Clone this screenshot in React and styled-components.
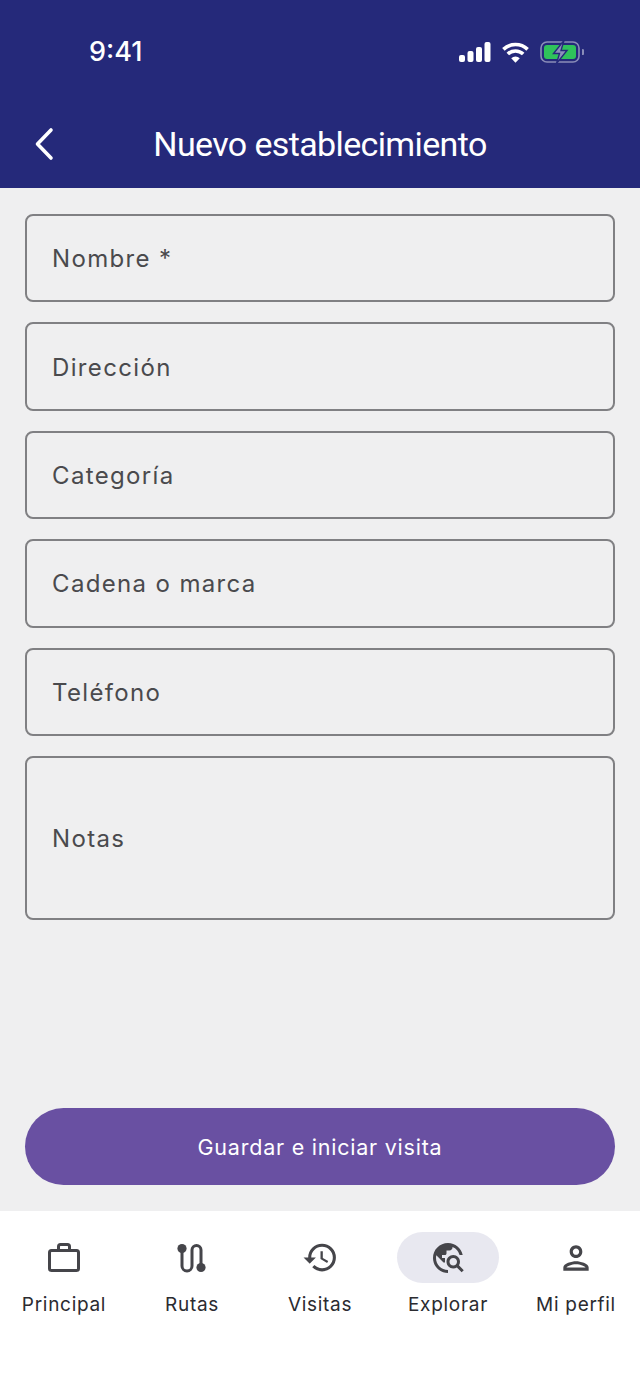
import React from "react";
import styled, { createGlobalStyle } from "styled-components";
import { MdHistory, MdTravelExplore, MdOutlinePerson } from "react-icons/md";

const Global = createGlobalStyle`
  html, body { margin: 0; padding: 0; background: #efeff0; }
  body { font-family: Inter, "Liberation Sans", sans-serif; }
  * { box-sizing: border-box; }
`;
const Screen = styled.div`
  width: 640px; height: 1392px; display: flex; flex-direction: column; background: #efeff0; overflow: hidden;
`;
const Header = styled.header`
  height: 188px; background: #25297a; color: #fff; display: flex; flex-direction: column; flex: none;
`;
const StatusBar = styled.div`
  height: 104px; padding: 36px 56px 0 89px; display: flex; justify-content: space-between; align-items: flex-start;
`;
const Time = styled.span`
  font-size: 27px; font-weight: 500; line-height: 32px;
`;
const StatusIcons = styled.div`
  display: flex; align-items: center; gap: 11px; height: 32px;
`;
const TitleBar = styled.div`
  height: 84px; padding: 0 0 4px 32px; display: flex; align-items: center; position: relative;
`;
const Title = styled.h1`
  position: absolute; left: 0; right: 0; top: 0; bottom: 4px; margin: 0;
  display: flex; align-items: center; justify-content: center;
  font-family: Roboto, sans-serif; font-size: 34px; font-weight: 400; letter-spacing: -0.63px;
`;
const Form = styled.main`
  flex: 1; padding: 26px 25px; display: flex; flex-direction: column; gap: 20px;
`;
const Field = styled.div`
  height: ${p => p.$h || 88.4}px; border: 2px solid #808083; border-radius: 8px;
  padding: 1px 0 0 25px; display: flex; align-items: center;
  font-size: 24px; letter-spacing: 1.35px; color: #4a4a4d;
`;
const Footer = styled.div`
  padding: 0 25px 26px; flex: none;
`;
const Button = styled.button`
  width: 100%; height: 77px; border: 0; border-radius: 39px; background: #6950a2; color: #fff;
  font-family: Inter, sans-serif; font-size: 21.5px; font-weight: 400; letter-spacing: 0.77px;
`;
const Nav = styled.nav`
  height: 181px; flex: none; background: #fff; display: grid; grid-template-columns: repeat(5, 128px); padding-top: 21px;
  align-content: start;
`;
const NavItem = styled.div`
  display: flex; flex-direction: column; align-items: center; color: #45454a;
`;
const Pill = styled.div`
  width: 102px; height: 51px; border-radius: 26px; display: flex; align-items: center; justify-content: center;
  background: ${p => (p.$active ? "#e8e8f0" : "transparent")};
`;
const NavLabel = styled.span`
  margin-top: 10px; font-size: 19px; line-height: 24px; letter-spacing: 0.7px; color: #2b2b30; white-space: nowrap;
`;

const Signal = () => (
  <svg width="32" height="20" viewBox="0 0 32 20" fill="#fff">
    <rect x="0" y="13" width="6" height="7" rx="2" />
    <rect x="8.5" y="9" width="6" height="11" rx="2" />
    <rect x="17" y="5" width="6" height="15" rx="2" />
    <rect x="25.5" y="0" width="6" height="20" rx="2" />
  </svg>
);
const Wifi = () => (
  <svg width="27" height="21" viewBox="0 0 27 21" fill="none" stroke="#fff" strokeWidth="3.6">
    <path d="M1.4 7.4 A17.5 17.5 0 0 1 25.6 7.4" />
    <path d="M5.8 12 A11.2 11.2 0 0 1 21.2 12" />
    <path d="M13.5 20.8 L9.2 16.2 A6 6 0 0 1 17.8 16.2 Z" fill="#fff" stroke="none" />
  </svg>
);
const Battery = () => (
  <svg width="44" height="22" viewBox="0 0 44 22" fill="none">
    <rect x="1" y="1" width="38" height="20" rx="6" stroke="#8a8db8" strokeWidth="1.6" />
    <rect x="4" y="4" width="32" height="14" rx="3" fill="#2fc25b" />
    <path d="M42 8 a3 3 0 0 1 0 6 Z" fill="#8a8db8" />
    <path d="M24 -0.5 L13.5 12.5 H19.5 L16.5 22.5 L27 9.5 H21 Z" fill="#8d90bb" stroke="#25297a" strokeWidth="1.4" />
  </svg>
);
const Back = () => (
  <svg width="26" height="34" viewBox="0 0 26 34" fill="none" stroke="#fff" strokeWidth="3.6" strokeLinecap="round" strokeLinejoin="round">
    <path d="M19 3 L5.5 17 L19 31" />
  </svg>
);
const Briefcase = () => (
  <svg width="34" height="34" viewBox="0 0 34 34" fill="none" stroke="#45454a" strokeWidth="3">
    <rect x="2.5" y="9.5" width="29" height="20" rx="2" />
    <path d="M11.5 9.5 V5.5 a2 2 0 0 1 2 -2 h7 a2 2 0 0 1 2 2 V9.5" />
  </svg>
);
const Route = () => (
  <svg width="36" height="36" viewBox="0 0 36 36" fill="none" stroke="#45454a" strokeWidth="3" strokeLinecap="round">
    <circle cx="8" cy="8.5" r="4.6" fill="#45454a" stroke="none" />
    <circle cx="27" cy="27.5" r="4.6" fill="#45454a" stroke="none" />
    <path d="M8 8 V26 a5 5 0 0 0 10 0 V10 a4.5 4.5 0 0 1 9 0 V27" />
  </svg>
);

const fields = [
  { label: "Nombre *" }, { label: "Dirección" }, { label: "Categoría" },
  { label: "Cadena o marca" }, { label: "Teléfono" }, { label: "Notas", h: 164.4 },
];
const items = [
  { label: "Principal", icon: <Briefcase /> },
  { label: "Rutas", icon: <Route /> },
  { label: "Visitas", icon: <MdHistory size={37} /> },
  { label: "Explorar", icon: <MdTravelExplore size={36} />, active: true },
  { label: "Mi perfil", icon: <MdOutlinePerson size={38} /> },
];

export default function App() {
  return (
    <Screen>
      <Global />
      <Header>
        <StatusBar>
          <Time>9:41</Time>
          <StatusIcons><Signal /><Wifi /><Battery /></StatusIcons>
        </StatusBar>
        <TitleBar>
          <Back />
          <Title>Nuevo establecimiento</Title>
        </TitleBar>
      </Header>
      <Form>
        {fields.map(f => <Field key={f.label} $h={f.h}>{f.label}</Field>)}
      </Form>
      <Footer><Button>Guardar e iniciar visita</Button></Footer>
      <Nav>
        {items.map(i => (
          <NavItem key={i.label}>
            <Pill $active={i.active}>{i.icon}</Pill>
            <NavLabel>{i.label}</NavLabel>
          </NavItem>
        ))}
      </Nav>
    </Screen>
  );
}
